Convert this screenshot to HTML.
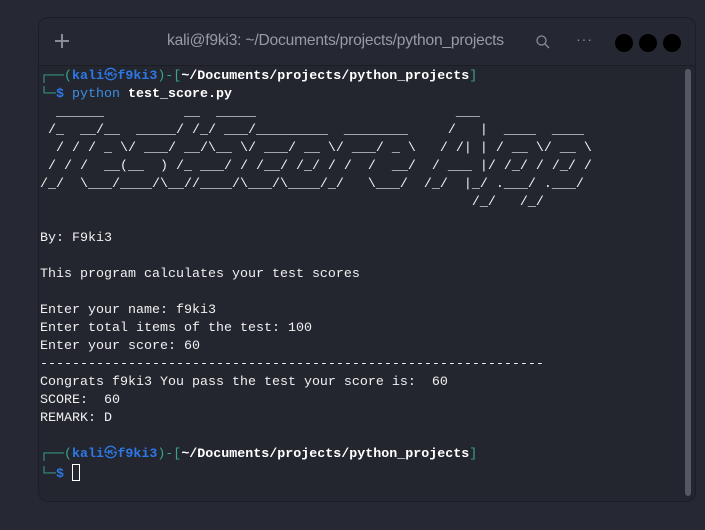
<!DOCTYPE html>
<html><head><meta charset="utf-8"><style>
html,body{margin:0;padding:0;width:705px;height:530px;overflow:hidden;background:#262933;}
.win{position:absolute;left:38px;top:17px;width:658px;height:485px;background:#23262f;border:1px solid #1c1e25;border-radius:10px;box-sizing:border-box;overflow:hidden;}
.tb{position:absolute;left:0;top:0;right:0;height:47px;background:#252832;border-bottom:1px solid #1b1d23;}
.title{position:absolute;left:128px;top:14px;font:15.6px "Liberation Sans",sans-serif;color:#9a9ca3;letter-spacing:-0.2px;}
.plus{position:absolute;left:16px;top:16px;width:14px;height:14px;}
.plus:before{content:"";position:absolute;left:6px;top:0;width:1.5px;height:14px;background:#8a8c93;}
.plus:after{content:"";position:absolute;left:0;top:6px;width:14px;height:1.5px;background:#8a8c93;}
.dot{position:absolute;top:16px;width:18px;height:18px;border-radius:50%;background:#000;}
pre{position:absolute;left:1px;top:50px;margin:0;font:13.33px/18px "Liberation Mono","DejaVu Sans Mono","Noto Sans CJK JP",monospace;color:#f0f0f0;}
.t{color:#3aa58a}.k{color:#2e78e6;font-weight:bold}.w{color:#fff;font-weight:bold}.p{color:#3d8fe0}
.sb{position:absolute;left:646px;top:51px;width:6px;height:427px;border-radius:3px;background:#565963;}
.cur{display:inline-block;width:8px;height:17px;border:1px solid #fff;box-sizing:border-box;vertical-align:-4px;}
</style></head><body>
<div class="win">
<div class="tb">
<div class="plus"></div>
<div class="title">kali@f9ki3: ~/Documents/projects/python_projects</div>
<svg style="position:absolute;left:497px;top:17px" width="14" height="14" viewBox="0 0 14 14"><circle cx="5.5" cy="5.5" r="4.5" fill="none" stroke="#8a8c93" stroke-width="1.3"/><line x1="9" y1="9" x2="13" y2="13" stroke="#8a8c93" stroke-width="1.3"/></svg>
<div style="position:absolute;left:537px;top:13px;color:#8a8c93;font:14px 'Liberation Sans',sans-serif;letter-spacing:1px">···</div>
<div class="dot" style="left:576px"></div><div class="dot" style="left:600px"></div><div class="dot" style="left:624px"></div>
</div>
<div class="sb"></div>
<pre><span class="t">┌──(</span><span class="k">kali㉿f9ki3</span><span class="t">)-[</span><span class="w">~/Documents/projects/python_projects</span><span class="t">]</span>
<span class="t">└─</span><span class="k">$</span> <span class="p">python</span> <span class="w">test_score.py</span>
  ______          __  _____                         ___
 /_  __/__  _____/ /_/ ___/_________  ________     /   |  ____  ____
  / / / _ \/ ___/ __/\__ \/ ___/ __ \/ ___/ _ \   / /| | / __ \/ __ \
 / / /  __(__  ) /_ ___/ / /__/ /_/ / /  /  __/  / ___ |/ /_/ / /_/ /
/_/  \___/____/\__//____/\___/\____/_/   \___/  /_/  |_/ .___/ .___/
                                                      /_/   /_/

By: F9ki3

This program calculates your test scores

Enter your name: f9ki3
Enter total items of the test: 100
Enter your score: 60
---------------------------------------------------------------
Congrats f9ki3 You pass the test your score is:  60
SCORE:  60
REMARK: D

<span class="t">┌──(</span><span class="k">kali㉿f9ki3</span><span class="t">)-[</span><span class="w">~/Documents/projects/python_projects</span><span class="t">]</span>
<span class="t">└─</span><span class="k">$</span> <span class="cur"></span></pre>
</div>
</body></html>
